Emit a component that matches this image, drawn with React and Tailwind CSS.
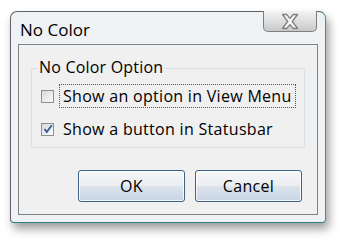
import React from 'react';

const font = { fontFamily: '"Open Sans", "Noto Sans", sans-serif' };

function CloseGlyph() {
  return (
    <svg width="24" height="17" viewBox="0 0 24 17">
      <path
        d="M4.5 1.5h4.2L12 5.4l3.3-3.9h4.2l-5.2 7 5.2 7h-4.2L12 11.6l-3.3 3.9H4.5l5.2-7z"
        fill="#f6f6f6"
        stroke="#7f7f7f"
        strokeWidth="1.3"
        strokeLinejoin="round"
      />
    </svg>
  );
}

function Checkbox({ checked }) {
  return (
    <div className="w-[13px] h-[13px] border border-[#8f8f8f] bg-white flex items-center justify-center shrink-0">
      <div className="w-[11px] h-[11px] bg-gradient-to-br from-[#d8d8d8] to-[#fbfbfb] flex items-center justify-center">
        {checked && (
          <svg width="10" height="10" viewBox="0 0 10 10">
            <path d="M1.5 5l2.3 3L8.8 1.2" fill="none" stroke="#3c56a0" strokeWidth="1.9" />
          </svg>
        )}
      </div>
    </div>
  );
}

function DialogButton({ children }) {
  return (
    <button className="w-[107px] h-[32px] rounded-[3px] border border-[#3f6184] bg-[linear-gradient(to_bottom,#f5f6f8_0%,#eceef1_48%,#dbe3ec_52%,#c9d5e3_100%)] shadow-[inset_0_0_0_1px_rgba(255,255,255,0.8)] text-[16px] tracking-[0.3px] text-black">
      {children}
    </button>
  );
}

export default function App() {
  return (
    <div className="w-[344px] h-[242px] bg-white overflow-hidden" style={font}>
      <div className="relative ml-[10px] mt-[11px] w-[316px] h-[212px] rounded-t-[7px] rounded-b-[4px] border border-[#5e6266] border-b-[#2d7c8e] border-r-[#4d8a98] bg-[#eef2f5] shadow-[3px_6px_10px_rgba(0,0,0,0.38)] flex flex-col px-[7px] pb-[7px]">
        <div className="h-[32px] shrink-0 flex items-center pl-[2px] pt-[2px]">
          <span className="text-[17px] text-black leading-none">No Color</span>
        </div>
        <div className="absolute top-[-1px] right-[8px] w-[54px] h-[21px] rounded-b-[5px] border border-[#7d7f83] border-t-0 bg-gradient-to-b from-[#f3f3f3] via-[#dfdfdf] to-[#c9c9c9] flex items-center justify-center">
          <CloseGlyph />
        </div>
        <div className="flex-1 border border-[#7f8287] bg-[#f0f0f0] flex flex-col pt-[23px] px-[12px]">
          <div className="relative h-[80px] border border-[#d5dfe5] rounded-[3px] flex flex-col pt-[15px] pl-[9px]">
            <span className="absolute left-[6px] top-[-12px] px-[1px] bg-[#f0f0f0] text-[16px] tracking-[0.2px] text-black leading-[20px]">
              No Color Option
            </span>
            <div className="flex items-center gap-[5px] text-[16px] tracking-[0.3px] text-black leading-[20px]">
              <Checkbox checked={false} />
              <span className="border border-dotted border-[#555] px-[3px] py-[1px]">Show an option in View Menu</span>
            </div>
            <div className="flex items-center gap-[5px] text-[16px] tracking-[0.3px] text-black leading-[20px] mt-[9px]">
              <Checkbox checked={true} />
              <span className="border border-transparent px-[3px] py-[1px]">Show a button in Statusbar</span>
            </div>
          </div>
          <div className="flex justify-end gap-[10px] mt-[22px] pr-[3px]">
            <DialogButton>OK</DialogButton>
            <DialogButton>Cancel</DialogButton>
          </div>
        </div>
      </div>
    </div>
  );
}
